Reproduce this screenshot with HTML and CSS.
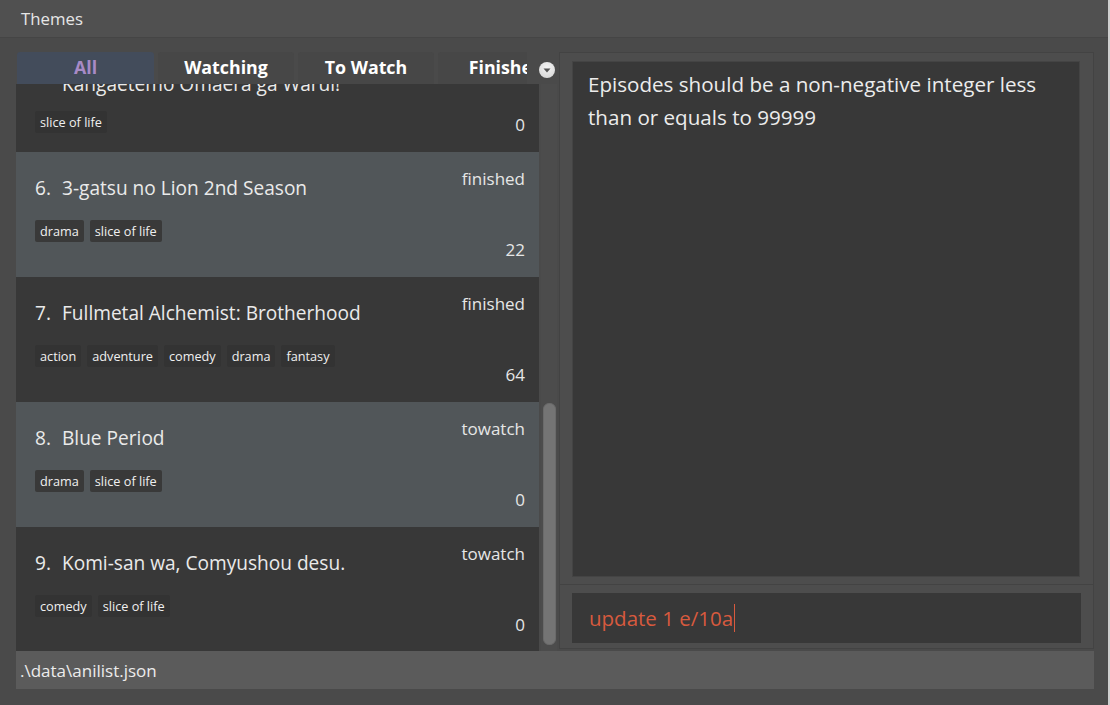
FILE: index.html
```html
<!DOCTYPE html>
<html>
<head>
<meta charset="utf-8">
<link rel="stylesheet" href="styles.css">
</head>
<body>
<div class="app">
  <div class="menubar"><span class="menu-item">Themes</span></div>
  <div class="main">
    <div class="left">
      <div class="tabbar">
        <div class="tabs">
          <div class="tab tab-active">All</div>
          <div class="tab">Watching</div>
          <div class="tab">To Watch</div>
          <div class="tab">Finished</div>
        </div>
        <div class="tab-menu">
          <span class="tab-menu-btn">
            <svg width="16" height="16" viewBox="0 0 16 16"><polygon points="4.5,6.5 11.5,6.5 8,10.5" fill="#555"/></svg>
          </span>
        </div>
      </div>
      <div class="listarea">
        <div class="list">
          <div class="list-scroll">
            <div class="cell cell-dark cell-wrap">
              <div class="cell-left">
                <div class="title"><span class="idx">5.</span><span class="name">Watashi ga Motenai no wa Dou<br>Kangaetemo Omaera ga Warui!</span></div>
                <div class="tags"><span class="tag">slice of life</span></div>
              </div>
              <div class="cell-right">
                <div class="status">watching</div>
                <div class="eps">0</div>
              </div>
            </div>
            <div class="cell cell-light">
              <div class="cell-left">
                <div class="title"><span class="idx">6.</span><span class="name">3-gatsu no Lion 2nd Season</span></div>
                <div class="tags"><span class="tag">drama</span><span class="tag">slice of life</span></div>
              </div>
              <div class="cell-right">
                <div class="status">finished</div>
                <div class="eps">22</div>
              </div>
            </div>
            <div class="cell cell-dark">
              <div class="cell-left">
                <div class="title"><span class="idx">7.</span><span class="name">Fullmetal Alchemist: Brotherhood</span></div>
                <div class="tags"><span class="tag">action</span><span class="tag">adventure</span><span class="tag">comedy</span><span class="tag">drama</span><span class="tag">fantasy</span></div>
              </div>
              <div class="cell-right">
                <div class="status">finished</div>
                <div class="eps">64</div>
              </div>
            </div>
            <div class="cell cell-light">
              <div class="cell-left">
                <div class="title"><span class="idx">8.</span><span class="name">Blue Period</span></div>
                <div class="tags"><span class="tag">drama</span><span class="tag">slice of life</span></div>
              </div>
              <div class="cell-right">
                <div class="status">towatch</div>
                <div class="eps">0</div>
              </div>
            </div>
            <div class="cell cell-dark">
              <div class="cell-left">
                <div class="title"><span class="idx">9.</span><span class="name">Komi-san wa, Comyushou desu.</span></div>
                <div class="tags"><span class="tag">comedy</span><span class="tag">slice of life</span></div>
              </div>
              <div class="cell-right">
                <div class="status">towatch</div>
                <div class="eps">0</div>
              </div>
            </div>
          </div>
        </div>
        <div class="scrollbar"><div class="thumb"></div></div>
      </div>
    </div>
    <div class="right">
      <div class="result-section">
        <div class="result-box">Episodes should be a non-negative integer less than or equals to 99999</div>
      </div>
      <div class="command-section">
        <div class="command-box"><span class="command-text">update 1 e/10a</span><span class="caret"></span></div>
      </div>
    </div>
  </div>
  <div class="statusbar">.\data\anilist.json</div>
  <div class="bottom-gap"></div>
</div>
</body>
</html>
```

FILE: styles.css
```css
html, body {
  margin: 0;
  padding: 0;
}
body {
  width: 1110px;
  height: 705px;
  overflow: hidden;
  background: #cfcfcf;
  font-family: "Open Sans", "Noto Sans", sans-serif;
}
.app {
  width: 1108px;
  height: 705px;
  background: #4a4a4a;
  display: flex;
  flex-direction: column;
}
.menubar {
  height: 38px;
  background: #505050;
  border-bottom: 1px solid #454545;
  display: flex;
  align-items: center;
  padding-left: 21px;
  box-sizing: border-box;
}
.menu-item {
  color: #e6e6e6;
  font-size: 16.8px;
}
.main {
  display: flex;
  padding: 14px 0 0 16px;
  gap: 2px;
  height: 613px;
  box-sizing: border-box;
  flex: none;
}
.left {
  width: 541px;
  display: flex;
  flex-direction: column;
}
.tabbar {
  height: 32px;
  display: flex;
  flex: none;
}
.tabs {
  width: 511px;
  overflow: hidden;
  display: flex;
  gap: 4px;
  padding-left: 1px;
  box-sizing: border-box;
}
.tab {
  flex: none;
  width: 136px;
  height: 32px;
  box-sizing: border-box;
  padding-bottom: 2px;
  background: #474747;
  border-radius: 3px 3px 0 0;
  color: #ffffff;
  font-weight: 700;
  font-size: 17.8px;
  line-height: 30px;
  display: flex;
  align-items: center;
  justify-content: center;
}
.tab-active {
  width: 137px;
  background: #434c5b;
  color: #a88ac6;
}
.tab-menu {
  flex: 1;
  display: flex;
  align-items: center;
  justify-content: flex-end;
  padding-right: 2px;
}
.tab-menu-btn {
  width: 16px;
  height: 16px;
  border-radius: 50%;
  background: radial-gradient(circle at 50% 35%, #f4f4f4, #d2d2d2);
  display: block;
  margin-top: 3px;
}
.tab-menu-btn svg {
  display: block;
}
.listarea {
  display: flex;
  height: 567px;
  gap: 2px;
}
.list {
  width: 523px;
  height: 567px;
  overflow: hidden;
}
.list-scroll {
  margin-top: -62px;
}
.cell {
  height: 125px;
  box-sizing: border-box;
  display: flex;
  justify-content: space-between;
  padding: 0 14px 0 19px;
  color: #e6e6e6;
}
.cell-dark {
  background: #383838;
}
.cell-light {
  background: #515659;
}
.cell-left {
  padding-top: 23px;
}
.title {
  display: flex;
  font-size: 19.1px;
  line-height: 26px;
  color: #eaeaea;
}
.idx {
  width: 27px;
  flex: none;
}
.tags {
  margin-top: 19px;
  display: flex;
  gap: 6px;
}
.tag {
  height: 22px;
  line-height: 22px;
  padding: 0 5px;
  font-size: 12.7px;
  color: #f0f0f0;
  border-radius: 2px;
}
.cell-light .tag {
  background: #393939;
}
.cell-dark .tag {
  background: #333333;
}
.cell-right {
  display: flex;
  flex-direction: column;
  justify-content: space-between;
  align-items: flex-end;
  padding: 16px 0 16px 0;
}
.status, .eps {
  font-size: 17px;
  line-height: 22px;
  color: #e6e6e6;
}
.cell-wrap {
  height: 130px;
}
.cell-wrap .tags {
  margin-top: 14px;
}
.scrollbar {
  width: 16px;
  height: 567px;
  background: #4c4c4c;
  display: flex;
  flex-direction: column;
  justify-content: flex-end;
  align-items: center;
  padding-bottom: 6px;
  box-sizing: border-box;
}
.thumb {
  width: 13px;
  height: 242px;
  background: #747474;
  border-radius: 6px;
  border: 1px solid #6a6a6a;
  box-sizing: border-box;
}
.right {
  width: 535px;
  height: 597px;
  border: 1px solid #434343;
  box-sizing: border-box;
  background: #4d4d4d;
  display: flex;
  flex-direction: column;
}
.result-section {
  padding: 8px 13px 7px 12px;
  border-bottom: 1px solid #434343;
  flex: none;
}
.result-box {
  height: 516px;
  box-sizing: border-box;
  background: #383838;
  border: 1px solid #444;
  padding: 6px 20px 0 15px;
  color: #ececec;
  font-size: 20.6px;
  line-height: 33px;
}
.command-section {
  padding: 8px 12px 0 12px;
  flex: 1;
}
.command-box {
  height: 50px;
  background: #383838;
  display: flex;
  align-items: center;
  padding-left: 17px;
  box-sizing: border-box;
}
.command-text {
  color: #d75a3e;
  font-size: 20.5px;
}
.caret {
  display: inline-block;
  width: 1px;
  height: 28px;
  background: #d75a3e;
  margin-left: 1px;
}
.statusbar {
  margin: 0 14px 0 16px;
  height: 38px;
  background: #5b5b5b;
  color: #ececec;
  font-size: 17px;
  display: flex;
  align-items: center;
  padding-left: 4px;
  flex: none;
}
.bottom-gap {
  flex: 1;
}
```
